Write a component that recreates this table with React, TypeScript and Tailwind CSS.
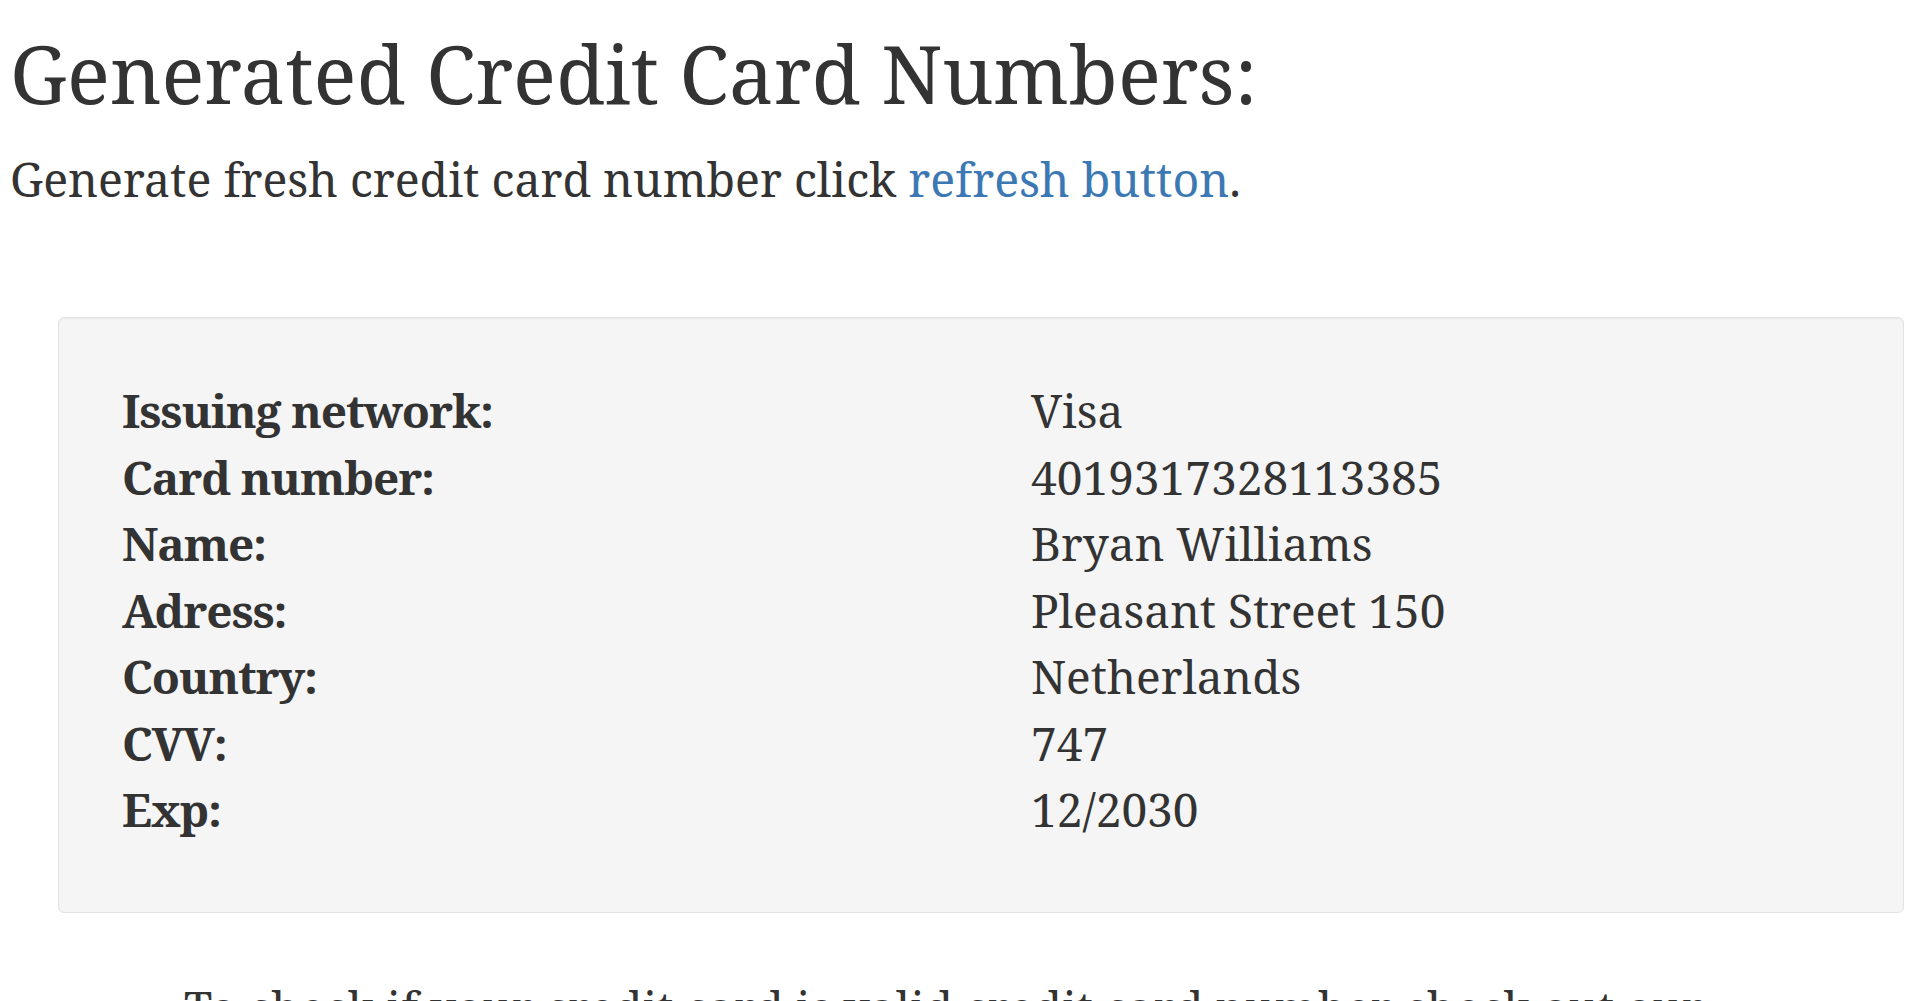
const rows: [string, string][] = [
  ["Issuing network:", "Visa"],
  ["Card number:", "4019317328113385"],
  ["Name:", "Bryan Williams"],
  ["Adress:", "Pleasant Street 150"],
  ["Country:", "Netherlands"],
  ["CVV:", "747"],
  ["Exp:", "12/2030"],
];

const serif = "font-['Noto_Serif','Droid_Serif','DejaVu_Serif',serif]";

export default function App() {
  return (
    <div className={`h-screen overflow-hidden bg-white text-[#333] ${serif}`}>
      <div className="pl-[10px] pr-[16px]">
        <h1 className="pt-[33px] text-[80px] leading-[80px] font-normal">Generated Credit Card Numbers:</h1>
        <p className="mt-[33px] text-[46.5px] leading-[66px]">
          Generate fresh credit card number click{" "}
          <a href="#" className="text-[#3c78b4]">
            refresh button
          </a>
          .
        </p>

        <div className="mt-[105px] ml-[48px] rounded-[6px] border border-[#e3e3e3] bg-[#f5f5f5] px-[63px] pt-[59px] pb-[69px] shadow-[inset_0_1px_2px_rgba(0,0,0,0.05)]">
          <div className="grid grid-cols-[909px_1fr] text-[46px] leading-[66.5px]">
            {rows.map(([label, value]) => (
              <div key={label} className="contents">
                <div className="font-bold tracking-[-1.1px]">{label}</div>
                <div>{value}</div>
              </div>
            ))}
          </div>
        </div>

        <p className="mt-[61px] w-[1720px] pl-[174px] text-[46px] leading-[66px]">
          To check if your credit card is valid credit card number check out our validator tool.
        </p>
      </div>
    </div>
  );
}
